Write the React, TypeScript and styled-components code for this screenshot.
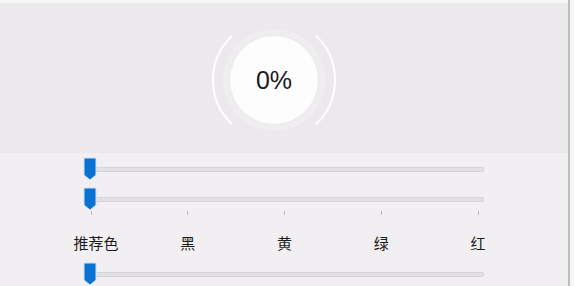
import React from "react";
import styled, { createGlobalStyle } from "styled-components";

const GlobalStyle = createGlobalStyle`
  html, body {
    margin: 0;
    padding: 0;
    background: #f6f6f6;
  }
  body {
    font-family: "Noto Sans", "Noto Sans CJK SC", sans-serif;
  }
`;

const Frame = styled.div`
  width: 570px;
  height: 286px;
  border-right: 2px solid #bcbcbc;
  padding-top: 3px;
  box-sizing: border-box;
  background: #f7f7f7;
  overflow: hidden;
  display: flex;
  flex-direction: column;
`;

const Header = styled.div`
  flex-shrink: 0;
  height: 150px;
  box-sizing: border-box;
  background: #ebe9eb;
  display: flex;
  justify-content: center;
  align-items: center;
  padding: 4px 20px 0 0;
`;

const Gauge = styled.div`
  position: relative;
  width: 128px;
  height: 128px;
  display: flex;
  justify-content: center;
  align-items: center;
  svg {
    position: absolute;
    left: 0;
    top: 0;
  }
`;

const Halo = styled.div`
  width: 102px;
  height: 102px;
  border-radius: 50%;
  background: #efedef;
  display: flex;
  justify-content: center;
  align-items: center;
`;

const Dial = styled.div`
  width: 88px;
  height: 88px;
  border-radius: 50%;
  background: #fdfdfd;
  box-shadow: 0 0 3px rgba(0, 0, 0, 0.04);
  display: flex;
  justify-content: center;
  align-items: center;
  font-family: "Liberation Sans", Arial, sans-serif;
  font-size: 25px;
  color: #1a1a1a;
  position: relative;
  z-index: 1;
`;

const Body = styled.div`
  flex: 1;
  background: #f1eff1;
  display: flex;
  flex-direction: column;
  padding-top: 4px;
`;

const SliderRow = styled.div<{ $gap?: number }>`
  position: relative;
  flex-shrink: 0;
  height: 24px;
  margin-top: ${(p) => p.$gap ?? 0}px;
  display: flex;
  align-items: center;
`;

const Track = styled.div`
  margin-left: 92px;
  width: 390px;
  height: 3px;
  background: #e2e0e2;
  border: 1px solid #d6d4d6;
  border-radius: 1px;
`;

const Thumb = styled.svg`
  position: absolute;
  left: 83px;
  top: 0;
`;

const Stops = styled.div`
  margin-left: 91px;
  width: 387px;
  margin-top: 0;
  display: flex;
  justify-content: space-between;
`;

const Stop = styled.div`
  width: 0;
  display: flex;
  flex-direction: column;
  align-items: center;
`;

const Tick = styled.div`
  width: 1px;
  height: 4px;
  background: #b8b8b8;
`;

const StopLabel = styled.div<{ $shift?: number }>`
  margin-top: 18px;
  white-space: nowrap;
  font-size: 15px;
  line-height: 20px;
  color: #1c1c1c;
  transform: translateX(${(p) => p.$shift ?? 0}px);
`;

function Slider({ gap }: { gap?: number }) {
  return (
    <SliderRow $gap={gap}>
      <Track />
      <Thumb width="14" height="24" viewBox="0 0 14 24">
        <path
          d="M1 1 H13 V18 L7 23 L1 18 Z"
          fill="#0c72d2"
          stroke="#cfe2f5"
          strokeWidth="1"
        />
      </Thumb>
    </SliderRow>
  );
}

const stops = [
  { label: "推荐色", shift: 5 },
  { label: "黑" },
  { label: "黄" },
  { label: "绿" },
  { label: "红" },
];

export default function App() {
  const c = 64;
  const r = 61;
  const a = (46 * Math.PI) / 180;
  const dx = r * Math.cos(a);
  const dy = r * Math.sin(a);
  return (
    <>
      <GlobalStyle />
      <Frame>
        <Header>
          <Gauge>
            <svg width="128" height="128" viewBox="0 0 128 128">
              <path
                d={`M${c - dx} ${c - dy} A${r} ${r} 0 0 0 ${c - dx} ${c + dy}`}
                fill="none"
                stroke="#ffffff"
                strokeWidth="2"
                strokeLinecap="round"
              />
              <path
                d={`M${c + dx} ${c - dy} A${r} ${r} 0 0 1 ${c + dx} ${c + dy}`}
                fill="none"
                stroke="#ffffff"
                strokeWidth="2"
                strokeLinecap="round"
              />
            </svg>
            <Halo>
              <Dial>0%</Dial>
            </Halo>
          </Gauge>
        </Header>
        <Body>
          <Slider gap={0} />
          <Slider gap={6} />
          <Stops>
            {stops.map((s) => (
              <Stop key={s.label}>
                <Tick />
                <StopLabel $shift={s.shift}>{s.label}</StopLabel>
              </Stop>
            ))}
          </Stops>
          <Slider gap={9} />
        </Body>
      </Frame>
    </>
  );
}
